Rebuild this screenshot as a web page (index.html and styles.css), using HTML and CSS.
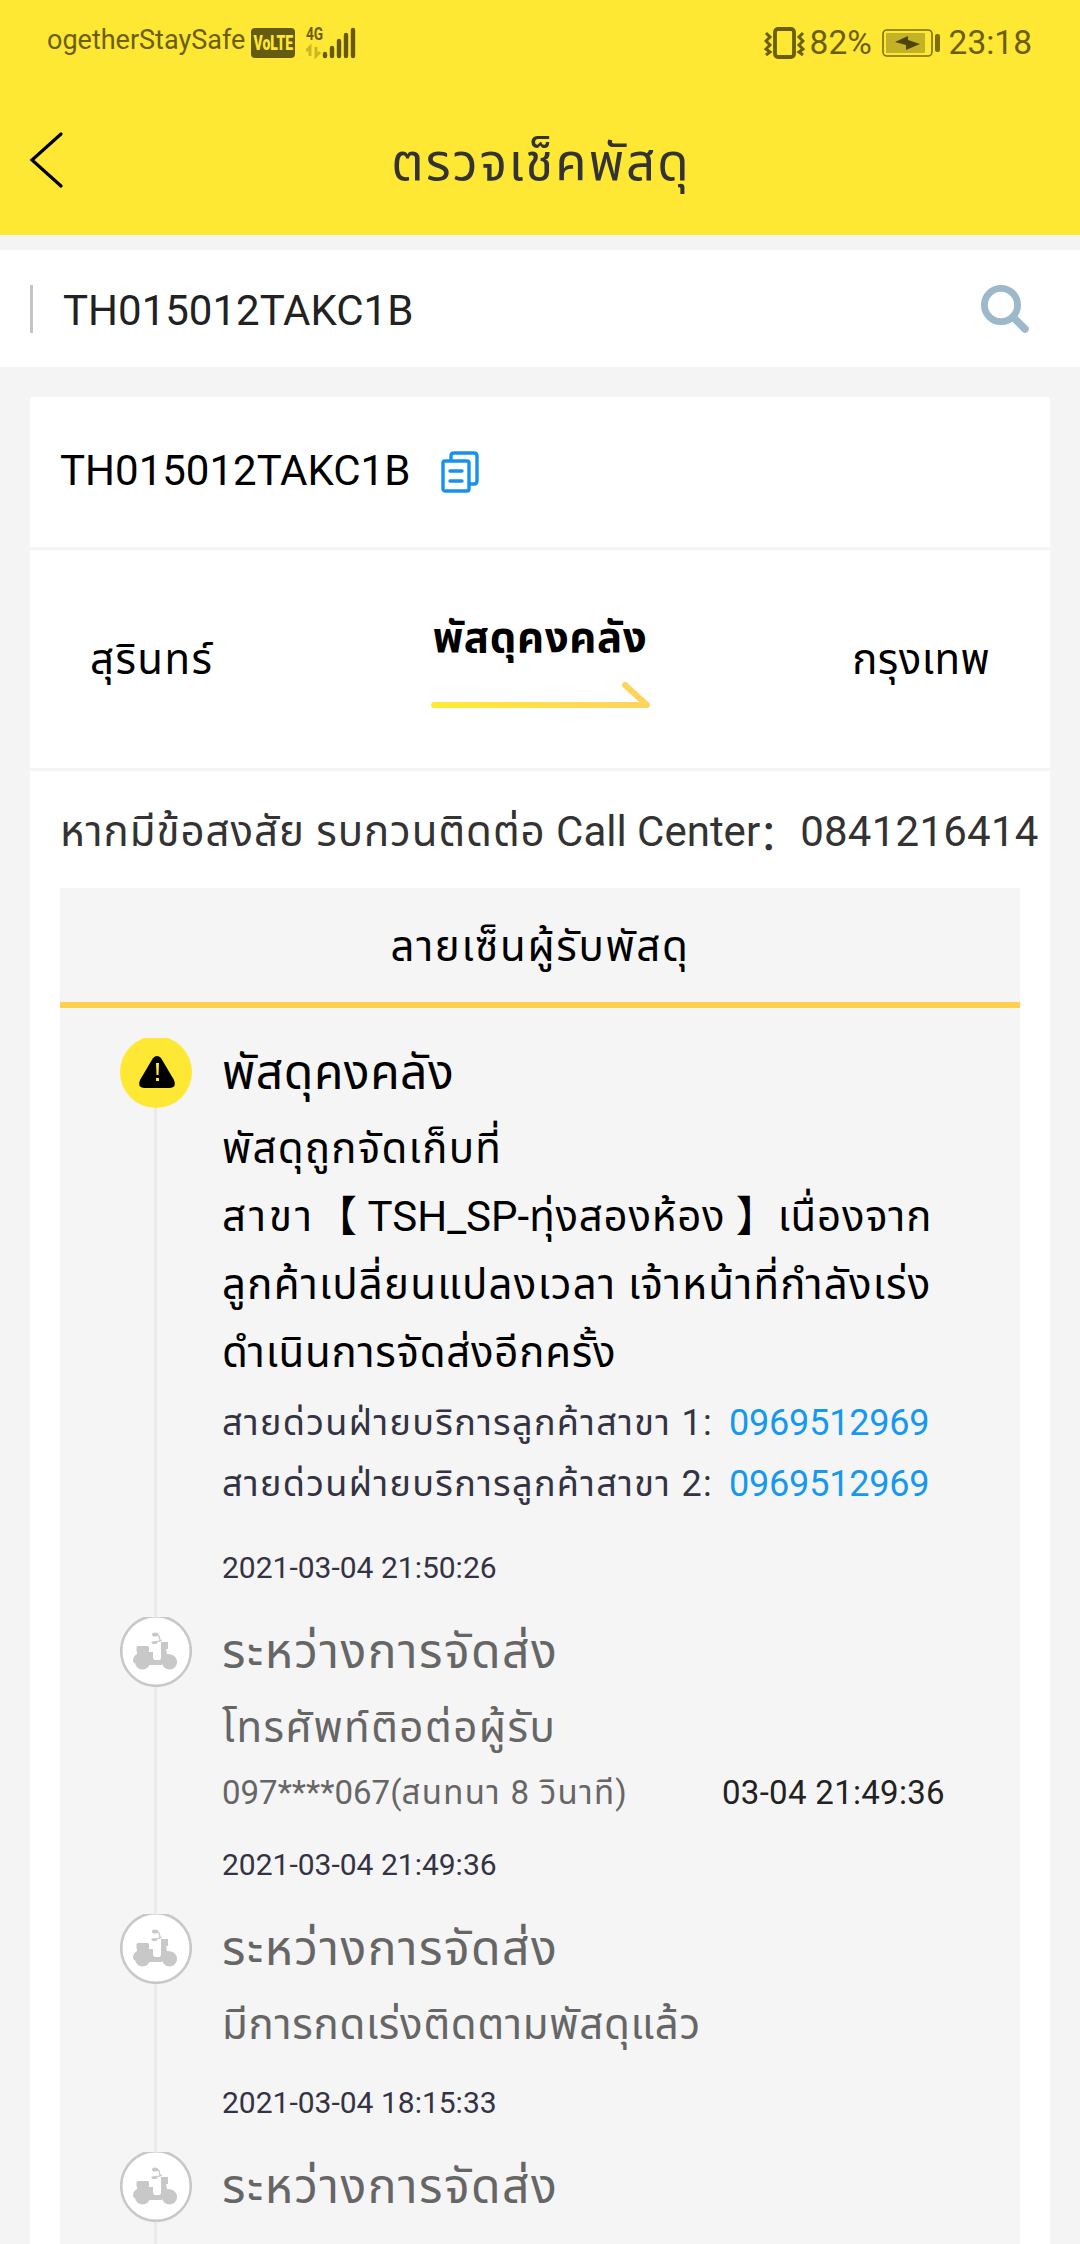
FILE: index.html
```html
<!DOCTYPE html>
<html lang="th">
<head>
  <meta charset="UTF-8" />
  <meta name="viewport" content="width=device-width, initial-scale=1.0" />
  <title>ตรวจเช็คพัสดุ</title>
  <link rel="stylesheet" href="styles.css">
</head>
<body>
  <svg class="sprite" width="0" height="0">
    <symbol id="scooter" viewBox="0 0 72 71">
      <g fill="#c8c8c8">
        <rect x="16.5" y="29" width="12.5" height="6.5" rx="1.5" />
        <path d="M17 35h16v6q1 2 2 2h4q2 0 2-2V25h7v7h-2l1 5q9 0 10 8l-1 2H42v1H28l-14-2-1-2q0-5 4-7z" />
        <circle cx="22.5" cy="45" r="7.5" />
        <circle cx="49.5" cy="45" r="7.5" />
        <ellipse cx="35" cy="17.5" rx="3" ry="2" />
        <ellipse cx="34.5" cy="25.5" rx="3" ry="1.5" />
      </g>
      <path d="M36 17q4 0 4 8M36 25l6-2" fill="none" stroke="#c8c8c8" stroke-width="1.3" />
    </symbol>
  </svg>

  <header class="header">
    <div class="status-bar">
      <div class="status-left">
        <span class="carrier">ogetherStaySafe</span>
        <span class="volte"><span>VoLTE</span></span>
        <span class="network">4G</span>
        <svg class="signal" width="52" height="34" viewBox="0 0 52 34">
          <path d="M0 25l4-4v9M10 21v9l4-4" stroke="#c9b822" stroke-width="3" fill="none" />
          <path d="M19 28v2M26 22v8M33 15v15M40 9v21M47 4v26" stroke="#66590c" stroke-width="4.4" stroke-linecap="round" />
        </svg>
      </div>
      <div class="status-right">
        <svg class="vibrate" width="41" height="32" viewBox="0 0 41 32" fill="none" stroke="#6b5e0a">
          <rect x="11" y="2" width="19" height="28" rx="3" stroke-width="3.8" />
          <path d="M2 6l4 4-4 4 4 4-4 4 4 3-4 3M39 6l-4 4 4 4-4 4 4 4-4 3 4 3" stroke-width="3" />
        </svg>
        <span class="percent">82%</span>
        <svg class="battery" width="59" height="28" viewBox="0 0 59 28">
          <rect x="1" y="1" width="49" height="26" rx="4" fill="none" stroke="#7d6f0e" stroke-width="1.6" />
          <rect x="4" y="4" width="39" height="20" rx="1" fill="#c3b126" />
          <path d="M13 13l13-6v4l12 4-14 6v-5z" fill="#4f4508" />
          <rect x="53" y="5" width="5" height="18" rx="2" fill="#7d6f0e" />
        </svg>
        <span class="clock">23:18</span>
      </div>
    </div>
    <div class="nav-bar">
      <svg class="back" width="34" height="56" viewBox="0 0 34 56">
        <path d="M32 2L3 28l29 26" fill="none" stroke="#000" stroke-width="3.2" stroke-linecap="round" />
      </svg>
      <h1>ตรวจเช็คพัสดุ</h1>
    </div>
  </header>

  <div class="search-bar">
    <div class="search-text">TH015012TAKC1B</div>
    <svg width="48" height="48" viewBox="0 0 48 48" fill="none" stroke="#9db7cb">
      <circle cx="20" cy="20" r="16.6" stroke-width="6.8" />
      <path d="M32 32l12 12" stroke-width="7.5" stroke-linecap="round" />
    </svg>
  </div>

  <main class="card">
    <div class="number-row">
      <span>TH015012TAKC1B</span>
      <svg width="38" height="42" viewBox="0 0 38 42" fill="none" stroke="#1890ee" stroke-width="3.4">
        <path d="M10 9V5q0-3 3-3h20q3 0 3 3v25q0 3-3 3h-4" />
        <rect x="2" y="10" width="26" height="30" rx="2" />
        <path d="M9 20h12M9 30h12" stroke-linecap="round" />
      </svg>
    </div>

    <div class="route">
      <span class="from">สุรินทร์</span>
      <div class="route-status">
        <b>พัสดุคงคลัง</b>
        <svg width="220" height="28" viewBox="0 0 220 28">
          <defs>
            <linearGradient id="arrow" gradientUnits="userSpaceOnUse" x1="0" y1="0" x2="220" y2="0">
              <stop offset="0.1" stop-color="#ffe935" />
              <stop offset="0.9" stop-color="#ffd45c" />
            </linearGradient>
          </defs>
          <path d="M4 24h213L195 4" fill="none" stroke="url(#arrow)" stroke-width="6" stroke-linecap="round" stroke-linejoin="round" />
        </svg>
      </div>
      <span class="to">กรุงเทพ</span>
    </div>

    <div class="call-center">
      <span class="question">หากมีข้อสงสัย รบกวนติดต่อ</span>
      <span>Call Center</span><span class="colon">：</span><span class="number">0841216414</span>
    </div>

    <section class="tracking">
      <h2>ลายเซ็นผู้รับพัสดุ</h2>

      <div class="step active">
        <div class="marker">
          <svg width="72" height="70" viewBox="0 0 72 70">
            <circle cx="36" cy="34" r="36" fill="#ffe834" />
            <path d="M33 20q4-4 8 0l13 22q3 7-4 8H24q-7-1-4-8z" fill="#000" />
            <path d="M36 25h3l-.5 12h-2zM36 40h3v3h-3z" fill="#ffe834" />
          </svg>
        </div>
        <div class="info">
          <h3>พัสดุคงคลัง</h3>
          <p class="desc">
            พัสดุถูกจัดเก็บที่<br>
            <span class="branch">สาขา</span><span class="code">【 TSH_SP-</span><span class="place">ทุ่งสองห้อง</span><span class="code"> 】</span><span class="place">เนื่องจาก</span><br>
            ลูกค้าเปลี่ยนแปลงเวลา เจ้าหน้าที่กำลังเร่ง<br>
            <span class="tight">ดำเนินการจัดส่งอีกครั้ง</span>
          </p>
          <div class="hotlines">
            <div class="hotline"><span>สายด่วนฝ่ายบริการลูกค้าสาขา 1:</span><a>0969512969</a></div>
            <div class="hotline"><span>สายด่วนฝ่ายบริการลูกค้าสาขา 2:</span><a>0969512969</a></div>
          </div>
          <time class="after-hotline">2021-03-04 21:50:26</time>
        </div>
      </div>

      <div class="step">
        <div class="marker">
          <svg width="72" height="70" viewBox="0 0 72 70">
            <circle cx="36" cy="34" r="34.8" fill="#fff" stroke="#c8c8c8" stroke-width="2.6" />
            <use href="#scooter" width="72" height="71" />
          </svg>
        </div>
        <div class="info">
          <h3>ระหว่างการจัดส่ง</h3>
          <p class="desc">โทรศัพท์ติอต่อผู้รับ</p>
          <div class="call"><span class="caller">097****067(<span>สนทนา 8 วินาที</span>)</span><span class="call-time">03-04 21:49:36</span></div>
          <time class="after-call">2021-03-04 21:49:36</time>
        </div>
      </div>

      <div class="step">
        <div class="marker">
          <svg width="72" height="70" viewBox="0 0 72 70">
            <circle cx="36" cy="34" r="34.8" fill="#fff" stroke="#c8c8c8" stroke-width="2.6" />
            <use href="#scooter" width="72" height="71" />
          </svg>
        </div>
        <div class="info">
          <h3>ระหว่างการจัดส่ง</h3>
          <p class="desc"><span class="tight">มีการกดเร่งติดตามพัสดุแล้ว</span></p>
          <time>2021-03-04 18:15:33</time>
        </div>
      </div>

      <div class="step">
        <div class="marker">
          <svg width="72" height="70" viewBox="0 0 72 70">
            <circle cx="36" cy="34" r="34.8" fill="#fff" stroke="#c8c8c8" stroke-width="2.6" />
            <use href="#scooter" width="72" height="71" />
          </svg>
        </div>
        <div class="info">
          <h3>ระหว่างการจัดส่ง</h3>
        </div>
      </div>
    </section>
  </main>
</body>
</html>
```
FILE: styles.css
```css
* {
  box-sizing: border-box;
  margin: 0;
  padding: 0;
}
body {
  width: 1080px;
  height: 2244px;
  overflow: hidden;
  display: flex;
  flex-direction: column;
  font-family: Roboto, "Noto Sans Thai", "Noto Sans", "Noto Sans CJK SC", sans-serif;
  font-size: 42px;
  background-color: #f4f4f4;
  color: #000;
  white-space: nowrap;
}
svg {
  display: block;
  flex-shrink: 0;
}
.sprite {
  position: absolute;
}
.header {
  height: 235px;
  flex-shrink: 0;
  background-color: #ffe834;
}
.status-bar {
  height: 85px;
  display: flex;
  justify-content: space-between;
  padding: 0 48px 0 47px;
  color: #6b5e0a;
}
.status-left, .status-right {
  display: flex;
  align-items: center;
}
.carrier {
  font-size: 27px;
  width: 204px;
  line-height: 80px;
  margin-bottom: 5px;
}
.volte {
  width: 44px;
  height: 30px;
  border-radius: 4px;
  background-color: #665b12;
  color: #ffe834;
  font-size: 20px;
  font-weight: 900;
  line-height: 31px;
  display: flex;
  justify-content: center;
}
.volte span {
  transform: scaleX(0.7);
}
.network {
  width: 17px;
  margin-left: 11px;
  font-size: 19px;
  line-height: 18px;
  font-weight: 700;
  margin-bottom: 17px;
  transform: scaleX(0.72);
  transform-origin: left;
}
.signal {
  margin-left: -17px;
}
.vibrate {
  margin-right: 5px;
}
.percent {
  font-size: 33.5px;
  width: 72px;
  line-height: 86px;
}
.battery {
  margin-right: 8px;
}
.clock {
  font-size: 33.5px;
  line-height: 86px;
}
.nav-bar {
  height: 150px;
  display: flex;
  align-items: flex-start;
  padding-left: 29px;
}
.back {
  margin-top: 47px;
}
h1 {
  flex: 1;
  margin-right: 61px;
  font-size: 51px;
  font-weight: 400;
  line-height: 156px;
  letter-spacing: 2px;
  text-align: center;
  color: #333;
}
.search-bar {
  height: 117px;
  margin-top: 15px;
  flex-shrink: 0;
  background-color: #fff;
  display: flex;
  align-items: center;
  justify-content: space-between;
  padding: 0 51px 0 30px;
}
.search-text {
  height: 48px;
  line-height: 51px;
  padding-left: 30px;
  border-left: 3px solid #c4c4c4;
  color: #222;
}
.card {
  width: 1020px;
  margin: 30px 30px 0;
  flex: 1;
  background-color: #fff;
}
.number-row {
  height: 153px;
  display: flex;
  align-items: center;
  gap: 31px;
  padding-left: 30px;
  border-bottom: 3px solid #f4f4f4;
}
.number-row span {
  line-height: 60px;
  margin-bottom: 3px;
}
.route {
  height: 221px;
  display: flex;
  align-items: center;
  justify-content: space-between;
  padding: 0 60px;
  border-bottom: 3px solid #f4f4f4;
}
.from, .to {
  flex: 1;
  line-height: 60px;
  margin-top: 2px;
}
.from {
  letter-spacing: 1.4px;
}
.to {
  letter-spacing: 0.4px;
  text-align: right;
}
.route-status {
  display: flex;
  flex-direction: column;
  align-items: center;
  gap: 13px;
  margin-bottom: 2px;
}
.route-status b {
  line-height: 60px;
  letter-spacing: 0.6px;
}
.call-center {
  height: 117px;
  padding-left: 30px;
  line-height: 121px;
  color: #333;
}
.question {
  letter-spacing: 0.95px;
}
.number {
  letter-spacing: 0.25px;
}
.colon {
  display: inline-block;
  width: 40px;
  line-height: 60px;
  transform: translate(-2px, 4px);
}
.tracking {
  margin: 0 30px;
  background-color: #f5f5f5;
}
h2 {
  height: 120px;
  font-size: 42px;
  font-weight: 400;
  line-height: 118px;
  letter-spacing: 1.65px;
  text-align: center;
  border-bottom: 6px solid #ffcf4f;
  margin-bottom: 30px;
}
.step {
  display: flex;
  gap: 30px;
  padding-left: 60px;
  color: #666;
}
.step.active {
  color: #000;
}
.marker {
  width: 72px;
  display: flex;
  flex-direction: column;
  align-items: center;
}
/* line down to the next step */
.marker::after {
  content: "";
  width: 3px;
  flex: 1;
  margin-right: 1px;
  background-color: #eaeaea;
}
.info {
  padding-bottom: 29px;
}
h3 {
  font-size: 48px;
  font-weight: 400;
  line-height: 69px;
  letter-spacing: 1.5px;
}
.active h3 {
  letter-spacing: 0.5px;
}
.desc {
  margin-top: 8px;
  line-height: 68px;
  letter-spacing: 1.5px;
}
.active .desc {
  letter-spacing: 1.25px;
}
.desc .branch {
  letter-spacing: 3px;
}
.desc .code {
  letter-spacing: 0;
}
.desc .place, .desc .tight {
  letter-spacing: 0.75px;
}
.hotlines {
  margin-top: 6px;
  font-size: 36px;
  line-height: 61px;
  color: #334;
}
.hotline {
  display: flex;
}
.hotline span {
  width: 507px;
  letter-spacing: 1.35px;
}
.hotline a {
  color: #1598f0;
  letter-spacing: -0.2px;
}
.call {
  display: flex;
  margin-top: 6px;
  font-size: 33px;
  line-height: 50px;
}
.caller {
  width: 500px;
}
.caller span {
  letter-spacing: 1.35px;
}
.call-time {
  color: #222;
  letter-spacing: 0.3px;
}
time {
  display: block;
  margin-top: 24px;
  font-size: 30px;
  line-height: 40px;
  color: #334;
}
.after-hotline {
  margin-top: 33px;
}
.after-call {
  margin-top: 27px;
}
```
